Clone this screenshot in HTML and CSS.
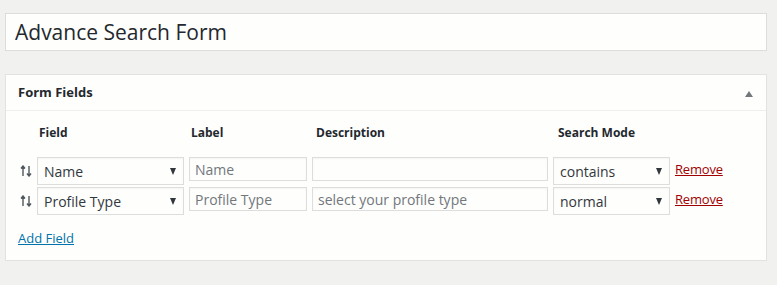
FILE: index.html
```html
<!DOCTYPE html>
<html>
  <head>
    <title>Advance Search Form</title>
    <link rel="stylesheet" href="styles.css">
  </head>
  <body>
    <div class="wrap">
      <input type="text" class="title-input" value="Advance Search Form" />

      <!-- 表单字段 -->
      <div class="postbox">
        <div class="postbox-header">
          <h2>Form Fields</h2>
          <span class="toggle-arrow"></span>
        </div>
        <div class="inside">
          <div class="fields-grid">
            <div></div>
            <div class="col-head">Field</div>
            <div class="col-head">Label</div>
            <div class="col-head desc-head">Description</div>
            <div class="col-head mode-head">Search Mode</div>
            <div></div>

            <span class="handle">
              <svg width="12" height="12" viewBox="0 0 12 12"><path d="M3 1v10M1 3.5L3 1l2 2.5M9 1v10M7 8.5L9 11l2-2.5" fill="none" stroke="#50575e" stroke-width="1.4"/></svg>
            </span>
            <div class="select-box field-select"><span>Name</span><i class="caret"></i></div>
            <input type="text" class="text-input" placeholder="Name" />
            <input type="text" class="text-input" placeholder="" />
            <div class="select-box"><span>contains</span><i class="caret"></i></div>
            <a href="#" class="remove-link">Remove</a>

            <span class="handle">
              <svg width="12" height="12" viewBox="0 0 12 12"><path d="M3 1v10M1 3.5L3 1l2 2.5M9 1v10M7 8.5L9 11l2-2.5" fill="none" stroke="#50575e" stroke-width="1.4"/></svg>
            </span>
            <div class="select-box field-select"><span>Profile Type</span><i class="caret"></i></div>
            <input type="text" class="text-input" placeholder="Profile Type" />
            <input type="text" class="text-input" placeholder="select your profile type" />
            <div class="select-box"><span>normal</span><i class="caret"></i></div>
            <a href="#" class="remove-link">Remove</a>
          </div>
          <a href="#" class="add-field">Add Field</a>
        </div>
      </div>
    </div>
  </body>
</html>
```

FILE: styles.css
```css
body {
  margin: 0;
  background: #f1f1f0;
  font-family: "Open Sans", "Noto Sans", sans-serif;
  color: #32373c;
  font-size: 13px;
}
* {
  box-sizing: border-box;
}
.wrap {
  padding: 13px 10px 0 5px;
}
.title-input {
  display: block;
  width: 100%;
  height: 38px;
  padding: 0 9px;
  border: 1px solid #dddddd;
  background: #fefefd;
  font-family: inherit;
  font-size: 21px;
  color: #23282d;
  outline: none;
}
.postbox {
  margin-top: 23px;
  background: #fefefd;
  border: 1px solid #e2e3e1;
}
.postbox-header {
  height: 36px;
  display: flex;
  align-items: center;
  justify-content: space-between;
  padding: 0 13px 0 12px;
  border-bottom: 1px solid #eeeeee;
}
.postbox-header h2 {
  margin: 0;
  font-size: 13px;
  font-weight: bold;
  color: #23282d;
  padding-bottom: 1px;
}
.toggle-arrow {
  width: 0;
  height: 0;
  border-left: 4px solid transparent;
  border-right: 4px solid transparent;
  border-bottom: 6px solid #72777c;
  margin-top: 2px;
}
.inside {
  padding: 11px 12px 13px 12px;
}
.fields-grid {
  display: grid;
  grid-template-columns: 14px 147px 118px 236px 117px auto;
  column-gap: 5px;
  row-gap: 2px;
  align-items: start;
}
.col-head {
  font-weight: bold;
  font-size: 12px;
  line-height: 22px;
  padding-left: 2px;
  margin-bottom: 11px;
  color: #23282d;
}
.desc-head {
  padding-left: 4px;
}
.mode-head {
  padding-left: 5px;
}
.handle {
  height: 28px;
  display: flex;
  align-items: center;
  justify-content: flex-end;
  padding-bottom: 1px;
}
.select-box {
  height: 28px;
  border: 1px solid #dddddd;
  background: #fefefd;
  display: flex;
  align-items: center;
  justify-content: space-between;
  padding: 0 7px 0 6px;
  font-size: 14px;
  color: #32373c;
  box-shadow: inset 0 1px 2px rgba(0, 0, 0, 0.04);
}
.caret {
  width: 0;
  height: 0;
  border-left: 3.5px solid transparent;
  border-right: 3.5px solid transparent;
  border-top: 7px solid #32373c;
}
.text-input {
  height: 24px;
  border: 1px solid #dddddd;
  background: #fefefd;
  padding: 0 5px;
  font-family: inherit;
  font-size: 14px;
  color: #32373c;
  outline: none;
  width: 100%;
  box-shadow: inset 0 1px 2px rgba(0, 0, 0, 0.04);
}
.text-input::placeholder {
  color: #72777c;
}
.remove-link {
  color: #a00000;
  font-size: 13px;
  line-height: 25px;
  letter-spacing: -0.2px;
}
.add-field {
  display: inline-block;
  margin-top: 14px;
  color: #0073aa;
  font-size: 13px;
}
```
